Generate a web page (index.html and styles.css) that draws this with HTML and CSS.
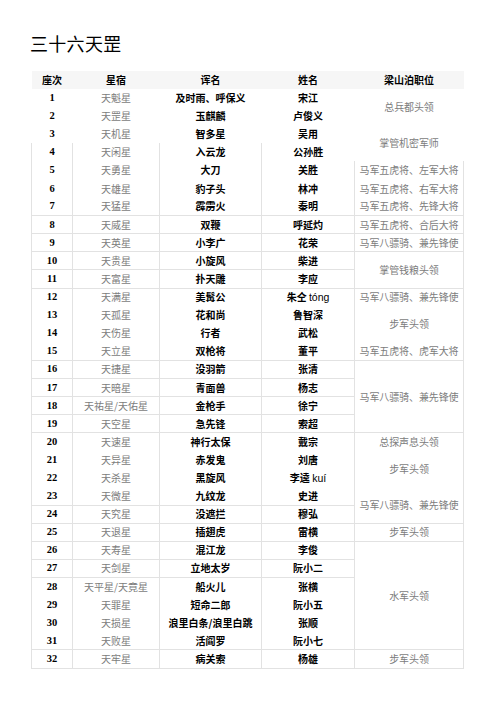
FILE: index.html
```html
<!DOCTYPE html>
<html lang="zh">
<head>
<meta charset="utf-8">
<title>三十六天罡</title>
<link rel="stylesheet" href="styles.css">
</head>
<body>
<h1 class="title">三十六天罡</h1>
<table class="roster">
<colgroup><col class="c1"><col class="c2"><col class="c3"><col class="c4"><col class="c5"></colgroup>
<thead>
<tr class="head"><th>座次</th><th>星宿</th><th>诨名</th><th>姓名</th><th>梁山泊职位</th></tr>
</thead>
<tbody>
<tr class="bare"><td class="no">1</td><td class="star">天魁星</td><td class="nick">及时雨、呼保义</td><td class="name">宋江</td><td class="pos bare" rowspan="2">总兵都头领</td></tr>
<tr class="bare"><td class="no">2</td><td class="star">天罡星</td><td class="nick">玉麒麟</td><td class="name">卢俊义</td></tr>
<tr class="bare"><td class="no">3</td><td class="star">天机星</td><td class="nick">智多星</td><td class="name">吴用</td><td class="pos bare" rowspan="2">掌管机密军师</td></tr>
<tr class="nb"><td class="no">4</td><td class="star">天闲星</td><td class="nick">入云龙</td><td class="name">公孙胜</td></tr>
<tr class="nb"><td class="no">5</td><td class="star">天勇星</td><td class="nick">大刀</td><td class="name">关胜</td><td class="pos">马军五虎将、左军大将</td></tr>
<tr class="nb"><td class="no">6</td><td class="star">天雄星</td><td class="nick">豹子头</td><td class="name">林冲</td><td class="pos">马军五虎将、右军大将</td></tr>
<tr><td class="no">7</td><td class="star">天猛星</td><td class="nick">霹雳火</td><td class="name">秦明</td><td class="pos">马军五虎将、先锋大将</td></tr>
<tr><td class="no">8</td><td class="star">天威星</td><td class="nick">双鞭</td><td class="name">呼延灼</td><td class="pos">马军五虎将、合后大将</td></tr>
<tr><td class="no">9</td><td class="star">天英星</td><td class="nick">小李广</td><td class="name">花荣</td><td class="pos">马军八骠骑、兼先锋使</td></tr>
<tr><td class="no">10</td><td class="star">天贵星</td><td class="nick">小旋风</td><td class="name">柴进</td><td class="pos" rowspan="2">掌管钱粮头领</td></tr>
<tr><td class="no">11</td><td class="star">天富星</td><td class="nick">扑天雕</td><td class="name">李应</td></tr>
<tr class="nb"><td class="no">12</td><td class="star">天满星</td><td class="nick">美髯公</td><td class="name">朱仝 <span class="py">tóng</span></td><td class="pos">马军八骠骑、兼先锋使</td></tr>
<tr class="nb"><td class="no">13</td><td class="star">天孤星</td><td class="nick">花和尚</td><td class="name">鲁智深</td><td class="pos" rowspan="2">步军头领</td></tr>
<tr class="nb"><td class="no">14</td><td class="star">天伤星</td><td class="nick">行者</td><td class="name">武松</td></tr>
<tr><td class="no">15</td><td class="star">天立星</td><td class="nick">双枪将</td><td class="name">董平</td><td class="pos">马军五虎将、虎军大将</td></tr>
<tr><td class="no">16</td><td class="star">天捷星</td><td class="nick">没羽箭</td><td class="name">张清</td><td class="pos" rowspan="4">马军八骠骑、兼先锋使</td></tr>
<tr><td class="no">17</td><td class="star">天暗星</td><td class="nick">青面兽</td><td class="name">杨志</td></tr>
<tr><td class="no">18</td><td class="star">天祐星/天佑星</td><td class="nick">金枪手</td><td class="name">徐宁</td></tr>
<tr><td class="no">19</td><td class="star">天空星</td><td class="nick">急先锋</td><td class="name">索超</td></tr>
<tr class="nb"><td class="no">20</td><td class="star">天速星</td><td class="nick">神行太保</td><td class="name">戴宗</td><td class="pos">总探声息头领</td></tr>
<tr class="nb"><td class="no">21</td><td class="star">天异星</td><td class="nick">赤发鬼</td><td class="name">刘唐</td><td class="pos" rowspan="2">步军头领</td></tr>
<tr class="nb"><td class="no">22</td><td class="star">天杀星</td><td class="nick">黑旋风</td><td class="name">李逵 <span class="py">kuí</span></td></tr>
<tr><td class="no">23</td><td class="star">天微星</td><td class="nick">九纹龙</td><td class="name">史进</td><td class="pos" rowspan="2">马军八骠骑、兼先锋使</td></tr>
<tr><td class="no">24</td><td class="star">天究星</td><td class="nick">没遮拦</td><td class="name">穆弘</td></tr>
<tr><td class="no">25</td><td class="star">天退星</td><td class="nick">插翅虎</td><td class="name">雷横</td><td class="pos">步军头领</td></tr>
<tr><td class="no">26</td><td class="star">天寿星</td><td class="nick">混江龙</td><td class="name">李俊</td><td class="pos" rowspan="6">水军头领</td></tr>
<tr><td class="no">27</td><td class="star">天剑星</td><td class="nick">立地太岁</td><td class="name">阮小二</td></tr>
<tr class="nb"><td class="no">28</td><td class="star">天平星/天竟星</td><td class="nick">船火儿</td><td class="name">张横</td></tr>
<tr class="nb"><td class="no">29</td><td class="star">天罪星</td><td class="nick">短命二郎</td><td class="name">阮小五</td></tr>
<tr class="nb"><td class="no">30</td><td class="star">天损星</td><td class="nick">浪里白条/浪里白跳</td><td class="name">张顺</td></tr>
<tr><td class="no">31</td><td class="star">天败星</td><td class="nick">活阎罗</td><td class="name">阮小七</td></tr>
<tr><td class="no">32</td><td class="star">天牢星</td><td class="nick">病关索</td><td class="name">杨雄</td><td class="pos">步军头领</td></tr>
</tbody>
</table>
</body>
</html>
```

FILE: styles.css
```css
html, body {
  margin: 0;
  padding: 0;
  background: #ffffff;
}

body {
  font-family: "Noto Sans CJK SC", "Noto Sans", sans-serif;
  color: #000000;
}

.title {
  margin: 34px 0 0 30px;
  font-size: 18px;
  line-height: 18px;
  font-weight: 400;
  letter-spacing: 0.3px;
}

.roster {
  margin: 19px 0 0 31px;
  border-collapse: collapse;
  table-layout: fixed;
  width: 432px;
  font-size: 10px;
}

.c1 { width: 41px; }
.c2 { width: 87px; }
.c3 { width: 102px; }
.c4 { width: 93px; }
.c5 { width: 109px; }

.head th {
  height: 18px;
  padding: 0;
  background: #f6f6f6;
  font-weight: 700;
  font-size: 10px;
  line-height: 12px;
  text-align: center;
  border: 1px hidden #e4e4e4;
}

.roster tbody tr {
  height: 18.1px;
}

.roster td {
  padding: 0;
  text-align: center;
  vertical-align: middle;
  line-height: 12px;
  white-space: nowrap;
  border: 1px solid #e2e2e2;
}

.roster tr.bare > td,
.roster td.bare {
  border-style: hidden;
}

.roster tr.nb > td {
  border-bottom-style: hidden;
}

.no {
  font-family: "Liberation Serif", "DejaVu Serif", serif;
  font-weight: 700;
  font-size: 10.5px;
}

.star {
  color: #7c7c7c;
  font-weight: 400;
}

.nick,
.name {
  font-weight: 700;
  color: #000000;
}

.py {
  font-family: "Liberation Sans", Arial, sans-serif;
  font-weight: 400;
  font-size: 10.5px;
}

.pos {
  color: #7c7c7c;
  font-weight: 400;
  letter-spacing: -0.1px;
}
```
